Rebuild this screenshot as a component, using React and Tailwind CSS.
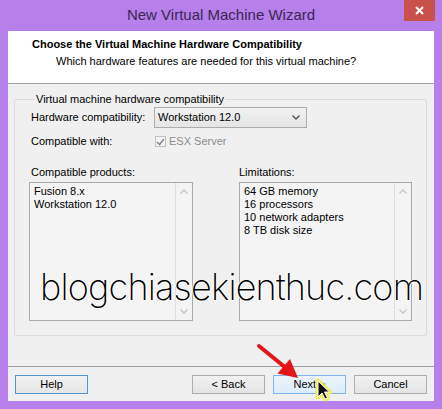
import React from 'react';

// Small chevron used by the combo box and the list scrollbars
function Chevron({ up = false, className = '' }) {
  return (
    <svg width="8" height="5" viewBox="0 0 8 5" className={className}>
      <polyline
        points={up ? '0.5,4.5 4,1 7.5,4.5' : '0.5,0.5 4,4 7.5,0.5'}
        fill="none"
        stroke="currentColor"
        strokeWidth="1.3"
      />
    </svg>
  );
}

function ListBox({ items, width }) {
  return (
    <div className={`${width} h-[139px] border border-[#a9a9a9] bg-[#f4f4f4] flex`}>
      <div className="flex-1 pl-[4px] pt-[2px] leading-[13px]">
        {items.map((item) => (
          <div key={item}>{item}</div>
        ))}
      </div>
      <div className="w-[17px] border-l border-[#dedede] flex flex-col items-center justify-between py-[6px] text-[#c6c6c6]">
        <Chevron up />
        <Chevron />
      </div>
    </div>
  );
}

function WizardButton({ children, tone = 'plain' }) {
  const tones = {
    plain: 'border-[#adadad] bg-gradient-to-b from-[#f2f2f2] to-[#e4e4e4]',
    focus: 'border-[#4f95cf] bg-gradient-to-b from-[#f2f2f2] to-[#e6e6e6]',
    hot: 'border-[#7eb4ea] bg-gradient-to-b from-[#ecf4fc] to-[#dcecfc]',
  };
  return (
    <button
      type="button"
      className={`w-[73px] h-[19px] border ${tones[tone]} text-[11px] leading-none text-black flex items-center justify-center`}
    >
      {children}
    </button>
  );
}

export default function App() {
  return (
    <div className="relative w-[442px] h-[409px] overflow-hidden bg-[#b67fe9] flex flex-col px-[8px] pb-[8px] font-['Liberation_Sans',Arial,sans-serif] text-[11px] text-black">
      {/* Title bar */}
      <div className="h-[31px] flex items-start">
        <div className="w-[30px]" />
        <div className="flex-1 text-center pt-[6px] text-[15px] leading-[18px] text-[#3b2656]">
          New Virtual Machine Wizard
        </div>
        <div className="w-[31px] h-[21px] -mr-[1px] bg-[#c8514b] flex items-center justify-center">
          <svg width="9" height="9" viewBox="0 0 9 9">
            <path d="M1 1 L8 8 M8 1 L1 8" stroke="#fff" strokeWidth="2" />
          </svg>
        </div>
      </div>

      <div className="flex-1 flex flex-col bg-[#f0f0f0]">
        {/* Header */}
        <div className="h-[53px] shrink-0 bg-white border-b border-[#a0a0a0] pl-[24px] pt-[6px]">
          <div className="font-bold leading-[15px]">Choose the Virtual Machine Hardware Compatibility</div>
          <div className="pl-[24px] leading-[15px] mt-[2px]">
            Which hardware features are needed for this virtual machine?
          </div>
        </div>

        {/* Group box */}
        <fieldset className="mt-[8px] ml-[6px] mr-[7px] h-[244px] border border-[#dcdcdc] rounded-[2px] pl-[14px] pr-[14px]">
          <legend className="ml-[6px] px-[1px] leading-[15px]">Virtual machine hardware compatibility</legend>

          <div className="flex items-center h-[21px]">
            <div className="w-[125px] pl-[2px]">Hardware compatibility:</div>
            <div className="w-[153px] h-[21px] border border-[#acacac] bg-gradient-to-b from-[#f2f2f2] to-[#e5e5e5] flex items-center pl-[3px] pr-[6px]">
              <span className="flex-1">Workstation 12.0</span>
              <Chevron className="text-[#505050]" />
            </div>
          </div>

          <div className="flex items-center h-[17px] mt-[5px]">
            <div className="w-[125px] pl-[2px]">Compatible with:</div>
            <div className="flex items-center ml-[1px] text-[#8c8c8c]">
              <span className="w-[11px] h-[11px] border border-[#c2c2c2] bg-[#f4f4f4] flex items-center justify-center">
                <svg width="9" height="8" viewBox="0 0 9 8">
                  <polyline points="1,4 3.5,6.5 8,1" fill="none" stroke="#8a8a8a" strokeWidth="1.6" />
                </svg>
              </span>
              <span className="ml-[3px]">ESX Server</span>
            </div>
          </div>

          <div className="flex gap-[46px] mt-[15px]">
            <div className="flex flex-col">
              <div className="pl-[2px] leading-[15px]">Compatible products:</div>
              <div className="mt-[2px]">
                <ListBox width="w-[164px]" items={['Fusion 8.x', 'Workstation 12.0']} />
              </div>
            </div>
            <div className="flex flex-col">
              <div className="leading-[15px]">Limitations:</div>
              <div className="mt-[2px]">
                <ListBox
                  width="w-[173px]"
                  items={['64 GB memory', '16 processors', '10 network adapters', '8 TB disk size']}
                />
              </div>
            </div>
          </div>
        </fieldset>

        <div className="flex-1" />

        {/* Footer */}
        <div className="h-[35px] shrink-0 border-t border-[#a0a0a0] flex items-start pt-[8px] px-[7px] gap-[8px]">
          <WizardButton tone="focus">Help</WizardButton>
          <div className="flex-1" />
          <WizardButton>&lt; Back</WizardButton>
          <WizardButton tone="hot">Next &gt;</WizardButton>
          <WizardButton>Cancel</WizardButton>
        </div>
      </div>

      {/* Watermark over the dialog */}
      <div className="absolute left-[40px] top-[265px] font-['Inter',sans-serif] font-extralight text-[36px] leading-[44px] text-black tracking-[-0.8px] [text-shadow:1px_0_0_#fff,-1px_0_0_#fff,0_1px_0_#fff]">
        blogchiasekienthuc.com
      </div>

      {/* Red pointer arrow and mouse cursor */}
      <svg className="absolute left-0 top-0 pointer-events-none" width="442" height="409" viewBox="0 0 442 409">
        <line x1="259" y1="346" x2="286" y2="368" stroke="#e5141b" strokeWidth="4" strokeLinecap="round" />
        <polygon points="298,378 277.5,373.5 290,359" fill="#e5141b" />
        <path
          d="M318 381 L318 397 L322 393 L325 399 L327.5 398 L324.5 392 L329.5 392 Z"
          fill="none"
          stroke="#f3ea55"
          strokeWidth="5"
          strokeLinejoin="round"
          opacity="0.9"
        />
        <path
          d="M318 381 L318 397 L322 393 L325 399 L327.5 398 L324.5 392 L329.5 392 Z"
          fill="#111"
          stroke="#fff"
          strokeWidth="1"
          strokeLinejoin="round"
        />
      </svg>
    </div>
  );
}
